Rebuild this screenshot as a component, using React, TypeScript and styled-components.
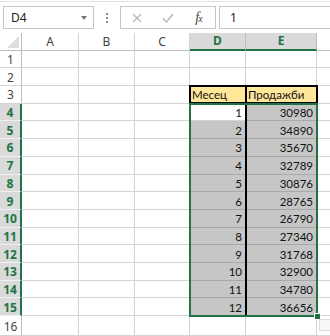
import React from 'react';
import styled, { createGlobalStyle } from 'styled-components';

const GREEN = '#217346';
const GRID = '#d4d4d4';

const GlobalStyle = createGlobalStyle`
  html, body {
    margin: 0;
    padding: 0;
    background: #fff;
    overflow: hidden;
  }
  body {
    font-family: 'Liberation Sans', Arial, sans-serif;
  }
`;

const Sheet = styled.div`
  width: 330px;
  height: 336px;
  overflow: hidden;
  display: flex;
  flex-direction: column;
`;

const FormulaBar = styled.div`
  display: flex;
  align-items: center;
  height: 40px;
  margin-top: 1px;
  box-sizing: border-box;
  border-top: 1px solid #e3e3e3;
  padding-left: 3px;
`;

const NameBox = styled.div`
  width: 91px;
  height: 23px;
  box-sizing: border-box;
  border: 1px solid #c6c6c6;
  display: flex;
  align-items: center;
  justify-content: space-between;
  padding: 0 6px 0 7px;
  font-family: 'Noto Sans', sans-serif;
  font-size: 12px;
  color: #222;
`;

const DropArrow = styled.span`
  width: 0;
  height: 0;
  border-left: 3.5px solid transparent;
  border-right: 3.5px solid transparent;
  border-top: 4px solid #777;
`;

const Dots = styled.div`
  width: 26px;
  display: flex;
  flex-direction: column;
  align-items: center;
  gap: 2px;

  span {
    width: 2px;
    height: 2px;
    background: #8a8a8a;
  }
`;

const FxBox = styled.div`
  width: 96px;
  height: 23px;
  box-sizing: border-box;
  border: 1px solid #c6c6c6;
  display: flex;
  align-items: center;
`;

const FxSlot = styled.div`
  width: 31px;
  display: flex;
  justify-content: center;
  align-items: center;
`;

const FxLabel = styled.span`
  font-family: 'Liberation Serif', serif;
  font-style: italic;
  font-size: 14px;
  color: #444;
  letter-spacing: -1px;

  small {
    font-size: 10px;
  }
`;

const FormulaInput = styled.div`
  flex: 1;
  height: 23px;
  margin-left: 3px;
  box-sizing: border-box;
  border: 1px solid #c6c6c6;
  border-right: none;
  display: flex;
  align-items: center;
  padding-left: 10px;
  font-family: 'Noto Sans', sans-serif;
  font-size: 12px;
  color: #222;
`;

const Grid = styled.div`
  display: grid;
  grid-template-columns: 22px 57px 56px 55px 56px 71px 1fr;
  grid-template-rows: 17.5px repeat(15, 17.7px) 20px;
`;

type Place = { $r: number; $c: number };

const Corner = styled.div<Place>`
  grid-row: ${({ $r }) => $r};
  grid-column: ${({ $c }) => $c};
  position: relative;
  box-sizing: border-box;
  border-right: 1px solid #bdbdbd;
  border-bottom: 1px solid #bdbdbd;

  &::after {
    content: '';
    position: absolute;
    right: 2px;
    bottom: 2px;
    width: 0;
    height: 0;
    border-left: 12px solid transparent;
    border-bottom: 12px solid #dcdcdc;
  }
`;

const ColHeader = styled.div<Place & { $active?: boolean }>`
  grid-row: ${({ $r }) => $r};
  grid-column: ${({ $c }) => $c};
  box-sizing: border-box;
  display: flex;
  align-items: center;
  justify-content: center;
  font-family: 'Noto Sans', sans-serif;
  font-size: 12px;
  background: ${({ $active }) => ($active ? '#d9d9d9' : '#fff')};
  color: ${({ $active }) => ($active ? GREEN : '#444')};
  font-weight: ${({ $active }) => ($active ? 700 : 400)};
  border-right: 1px solid ${({ $active }) => ($active ? '#bdbdbd' : GRID)};
  border-bottom: ${({ $active }) =>
    $active ? `2px solid ${GREEN}` : '1px solid #bdbdbd'};
`;

const RowHeader = styled.div<Place & { $active?: boolean }>`
  grid-row: ${({ $r }) => $r};
  grid-column: ${({ $c }) => $c};
  box-sizing: border-box;
  display: flex;
  align-items: center;
  justify-content: center;
  font-family: 'Noto Sans', sans-serif;
  font-size: 12px;
  padding-top: 1px;
  background: ${({ $active }) => ($active ? '#dadada' : '#fff')};
  color: ${({ $active }) => ($active ? GREEN : '#444')};
  font-weight: ${({ $active }) => ($active ? 700 : 400)};
  border-bottom: 1px solid ${({ $active }) => ($active ? '#f0f0f0' : GRID)};
  border-right: ${({ $active }) =>
    $active ? `2px solid ${GREEN}` : '1px solid #bdbdbd'};
`;

type Fill = 'plain' | 'sel' | 'head';

const Cell = styled.div<Place & { $fill: Fill; $right?: boolean }>`
  grid-row: ${({ $r }) => $r};
  grid-column: ${({ $c }) => $c};
  box-sizing: border-box;
  display: flex;
  align-items: center;
  justify-content: ${({ $right }) => ($right ? 'flex-end' : 'flex-start')};
  padding: 1px 3px 0 2px;
  font-family: 'Lato', sans-serif;
  font-size: 11.5px;
  color: #111;
  background: ${({ $fill }) =>
    $fill === 'sel' ? '#c6c6c6' : $fill === 'head' ? '#ffe699' : '#fff'};
  border-right: 1px solid ${GRID};
  border-bottom: ${({ $fill }) =>
    $fill === 'head' ? '2px solid #000' : `1px solid ${$fill === 'sel' ? '#a9a9a9' : GRID}`};
`;

const TableFrame = styled.div`
  grid-row: 4 / 17;
  grid-column: 5 / 7;
  margin: -1px;
  border: 2px solid #000;
  pointer-events: none;
  z-index: 1;
`;

const MidLine = styled.div`
  grid-row: 4 / 17;
  grid-column: 5 / 6;
  margin-right: -1px;
  border-right: 2px solid #000;
  pointer-events: none;
  z-index: 1;
`;

const Selection = styled.div`
  grid-row: 5 / 17;
  grid-column: 5 / 7;
  margin: -1px;
  border: 2px solid ${GREEN};
  position: relative;
  pointer-events: none;
  z-index: 2;
`;

const FillHandle = styled.span`
  position: absolute;
  right: -5px;
  bottom: -5px;
  width: 5px;
  height: 5px;
  background: ${GREEN};
  border: 1px solid #fff;
`;

const QuickAnalysis = styled.div`
  grid-row: 17;
  grid-column: 7;
  margin: 3px 0 0 2px;
  width: 12px;
  height: 12px;
  box-sizing: border-box;
  border: 1px solid #dcdcdc;
  background: #f7f7f7;
  z-index: 3;
`;

const months = [1, 2, 3, 4, 5, 6, 7, 8, 9, 10, 11, 12];
const sales = [
  30980, 34890, 35670, 32789, 30876, 28765, 26790, 27340, 31768, 32900, 34780,
  36656,
];
const columns = ['A', 'B', 'C', 'D', 'E', ''];

const App: React.FC = () => {
  const rows = Array.from({ length: 16 }, (_, i) => i + 1);

  const renderCell = (row: number, colIdx: number) => {
    const r = row + 1;
    const c = colIdx + 2;
    const key = `${row}-${colIdx}`;
    if (row === 3 && colIdx === 3)
      return (
        <Cell key={key} $r={r} $c={c} $fill="head">
          Месец
        </Cell>
      );
    if (row === 3 && colIdx === 4)
      return (
        <Cell key={key} $r={r} $c={c} $fill="head">
          Продажби
        </Cell>
      );
    if (row >= 4 && row <= 15 && (colIdx === 3 || colIdx === 4)) {
      const i = row - 4;
      const value = colIdx === 3 ? months[i] : sales[i];
      const fill: Fill = row === 4 && colIdx === 3 ? 'plain' : 'sel';
      return (
        <Cell key={key} $r={r} $c={c} $fill={fill} $right>
          {value}
        </Cell>
      );
    }
    return <Cell key={key} $r={r} $c={c} $fill="plain" />;
  };

  return (
    <Sheet>
      <GlobalStyle />
      <FormulaBar>
        <NameBox>
          D4
          <DropArrow />
        </NameBox>
        <Dots>
          <span />
          <span />
          <span />
        </Dots>
        <FxBox>
          <FxSlot>
            <svg width="10" height="10" viewBox="0 0 10 10">
              <path d="M1 1L9 9M9 1L1 9" stroke="#b5b5b5" strokeWidth="1.2" />
            </svg>
          </FxSlot>
          <FxSlot>
            <svg width="12" height="10" viewBox="0 0 12 10">
              <path
                d="M1 5.5L4.5 9L11 1"
                stroke="#b5b5b5"
                strokeWidth="1.4"
                fill="none"
              />
            </svg>
          </FxSlot>
          <FxSlot>
            <FxLabel>
              f<small>x</small>
            </FxLabel>
          </FxSlot>
        </FxBox>
        <FormulaInput>1</FormulaInput>
      </FormulaBar>
      <Grid>
        <Corner $r={1} $c={1} />
        {columns.map((name, i) => (
          <ColHeader key={`h${i}`} $r={1} $c={i + 2} $active={i === 3 || i === 4}>
            {name}
          </ColHeader>
        ))}
        {rows.map((row) => (
          <React.Fragment key={`r${row}`}>
            <RowHeader $r={row + 1} $c={1} $active={row >= 4 && row <= 15}>
              {row}
            </RowHeader>
            {columns.map((_, ci) => renderCell(row, ci))}
          </React.Fragment>
        ))}
        <TableFrame />
        <MidLine />
        <Selection>
          <FillHandle />
        </Selection>
        <QuickAnalysis />
      </Grid>
    </Sheet>
  );
};

export default App;
